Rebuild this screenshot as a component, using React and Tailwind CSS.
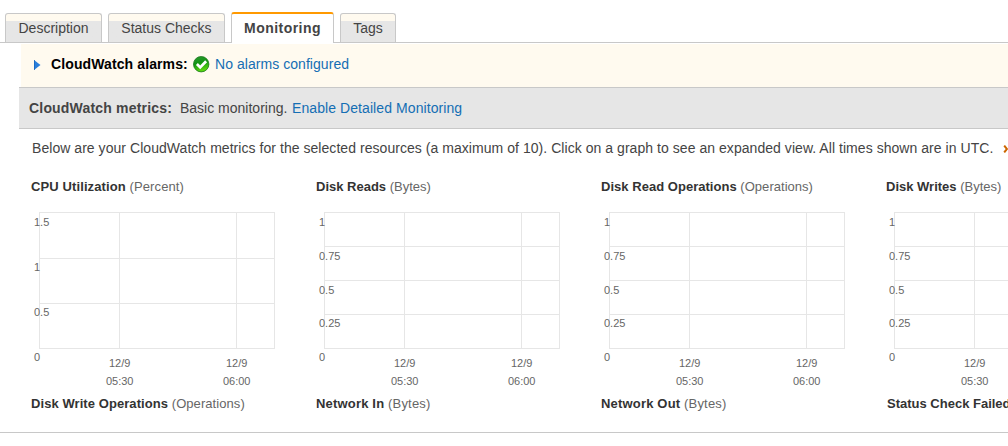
const tabs = [
  { label: "Description", width: "w-[97px]" },
  { label: "Status Checks", width: "w-[117px]" },
  { label: "Monitoring", width: "w-[103px]", active: true },
  { label: "Tags", width: "w-[56px]" },
];

const byteTicks = [
  { label: "1", y: 13, line: 0 },
  { label: "0.75", y: 47, line: 34 },
  { label: "0.5", y: 81, line: 68 },
  { label: "0.25", y: 114, line: 102 },
  { label: "0", y: 148, line: 136 },
];

const cpuTicks = [
  { label: "1.5", y: 13, line: 0 },
  { label: "1", y: 58, line: 46 },
  { label: "0.5", y: 103, line: 91 },
  { label: "0", y: 148, line: 136 },
];

const times = [
  { x: 88, hour: "05:30" },
  { x: 205, hour: "06:00" },
];

const charts = [
  { title: "CPU Utilization", unit: "(Percent)", ticks: cpuTicks, tracking: "tracking-[0.11px]" },
  { title: "Disk Reads", unit: "(Bytes)", ticks: byteTicks },
  { title: "Disk Read Operations", unit: "(Operations)", ticks: byteTicks, tracking: "tracking-[0.03px]" },
  { title: "Disk Writes", unit: "(Bytes)", ticks: byteTicks },
];

const nextRow = [
  { title: "Disk Write Operations", unit: "(Operations)", tracking: "tracking-[0.07px]" },
  { title: "Network In", unit: "(Bytes)", tracking: "tracking-[0.18px]" },
  { title: "Network Out", unit: "(Bytes)", tracking: "tracking-[0.18px]" },
  { title: "Status Check Failed", unit: "(Any)", shift: "pl-px" },
];

function Tab({ label, width, active }) {
  if (active) {
    return (
      <div className={`${width} z-10 -mb-px h-[31px] shrink-0 rounded-t-[3px] border-x border-t-2 border-x-[#c8c8c8] border-t-[#f90] bg-white pt-[4px] text-center text-[14px] leading-[20px] font-bold tracking-[0.45px] text-[#444]`}>
        {label}
      </div>
    );
  }
  return (
    <div className={`${width} h-[29px] shrink-0 rounded-t-[3px] border-x border-t border-[#c8c8c8] bg-linear-to-b from-[#fffaef] from-[7px] to-[#e6e6e6] to-[7px] pt-[4px] text-center text-[14px] leading-[20px] text-[#444]`}>
      {label}
    </div>
  );
}

function CheckIcon() {
  return (
    <svg width="17" height="17" viewBox="0 0 17 17" className="shrink-0">
      <defs>
        <linearGradient id="ok" x1="0" y1="0" x2="0.3" y2="1">
          <stop offset="0" stopColor="#2c9a35" />
          <stop offset="0.5" stopColor="#129412" />
          <stop offset="1" stopColor="#5bd80e" />
        </linearGradient>
      </defs>
      <circle cx="8.2" cy="8.2" r="7.7" fill="url(#ok)" stroke="#16761a" strokeWidth="0.8" />
      <path d="M3.9 8l3.3 3.4 5.9-6.1" fill="none" stroke="#fff" strokeWidth="2.7" />
    </svg>
  );
}

function Title({ title, unit, tracking = "tracking-normal" }) {
  return (
    <div className={`h-[18px] text-[13px] leading-[18px] whitespace-nowrap text-[#666] ${tracking}`}>
      <b className="text-[#333]">{title}</b> {unit}
    </div>
  );
}

function Chart({ title, unit, ticks, tracking }) {
  return (
    <div className="w-[285px] shrink-0">
      <Title title={title} unit={unit} tracking={tracking} />
      <svg width="285" height="182" viewBox="0 -16 285 182" className="block overflow-visible text-[11px]" shapeRendering="crispEdges">
        <g stroke="#e6e6e6" strokeWidth="1">
          {ticks.map((t) => (
            <line key={t.label} x1="8" x2="244" y1={t.line + 0.5} y2={t.line + 0.5} />
          ))}
          {[8, 88, 205, 243].map((x) => (
            <line key={x} x1={x + 0.5} x2={x + 0.5} y1="0" y2="137" />
          ))}
        </g>
        <g fill="#666">
          {ticks.map((t) => (
            <text key={t.label} x="3" y={t.y + 1}>{t.label}</text>
          ))}
          {times.map((t) => (
            <g key={t.hour} textAnchor="middle">
              <text x={t.x + 0.7} y="155">12/9</text>
              <text x={t.x + 0.7} y="173">{t.hour}</text>
            </g>
          ))}
        </g>
      </svg>
    </div>
  );
}

export default function App() {
  return (
    <div className="h-[446px] w-[1008px] overflow-hidden bg-white font-['Liberation_Sans',Arial,sans-serif] text-[14px] leading-[20px] text-[#444]">
      <div className="flex h-[43px] items-end gap-[6px] border-b border-[#c8c8c8] pl-[5px]">
        {tabs.map((t) => (
          <Tab key={t.label} {...t} />
        ))}
      </div>

      <div className="mt-px ml-[21px] flex h-[43px] items-center bg-[#fffaef] pb-[2px] pl-[13px]">
        <svg width="7" height="10" viewBox="0 0 7 10" className="shrink-0">
          <path d="M0 0l6.5 5L0 10z" fill="#2a7fdc" />
          <path d="M0 0v10" stroke="#1763b8" strokeWidth="1.4" />
        </svg>
        <b className="ml-[10px] h-[22px] w-[142px] tracking-[0.11px] text-black">CloudWatch alarms:</b>
        <CheckIcon />
        <span className="ml-[5px] h-[22px] tracking-[0.05px] text-[#146eb4]">No alarms configured</span>
      </div>

      <div className="ml-[19px] flex h-[42px] items-center border-y border-[#c8c8c8] bg-[#e6e6e6] pl-[10px]">
        <b className="w-[151px] tracking-[0.19px]">CloudWatch metrics:</b>
        <span className="w-[112px]">Basic monitoring.</span>
        <span className="tracking-[0.08px] text-[#146eb4]">Enable Detailed Monitoring</span>
      </div>

      <div className="flex h-[49px] pt-[9px] pl-[32px] whitespace-nowrap">
        <span className="w-[970px] shrink-0 tracking-[0.048px]">
          Below are your CloudWatch metrics for the selected resources (a maximum of 10). Click on a graph to see an expanded view. All times shown are in UTC.
        </span>
        <svg width="6" height="8" viewBox="0 0 6 8" className="mt-[7px] ml-px shrink-0">
          <path d="M1.2 0.6L4 4 1.2 7.4" fill="none" stroke="#cc6600" strokeWidth="2" />
        </svg>
      </div>

      <div className="flex h-[217px] pl-[31px]">
        {charts.map((c) => (
          <Chart key={c.title} {...c} />
        ))}
      </div>

      <div className="flex h-[38px] border-b border-[#c8c8c8] pl-[31px]">
        {nextRow.map((c) => (
          <div key={c.title} className={`w-[285px] shrink-0 ${c.shift ?? ""}`}>
            <Title title={c.title} unit={c.unit} tracking={c.tracking} />
          </div>
        ))}
      </div>
    </div>
  );
}
